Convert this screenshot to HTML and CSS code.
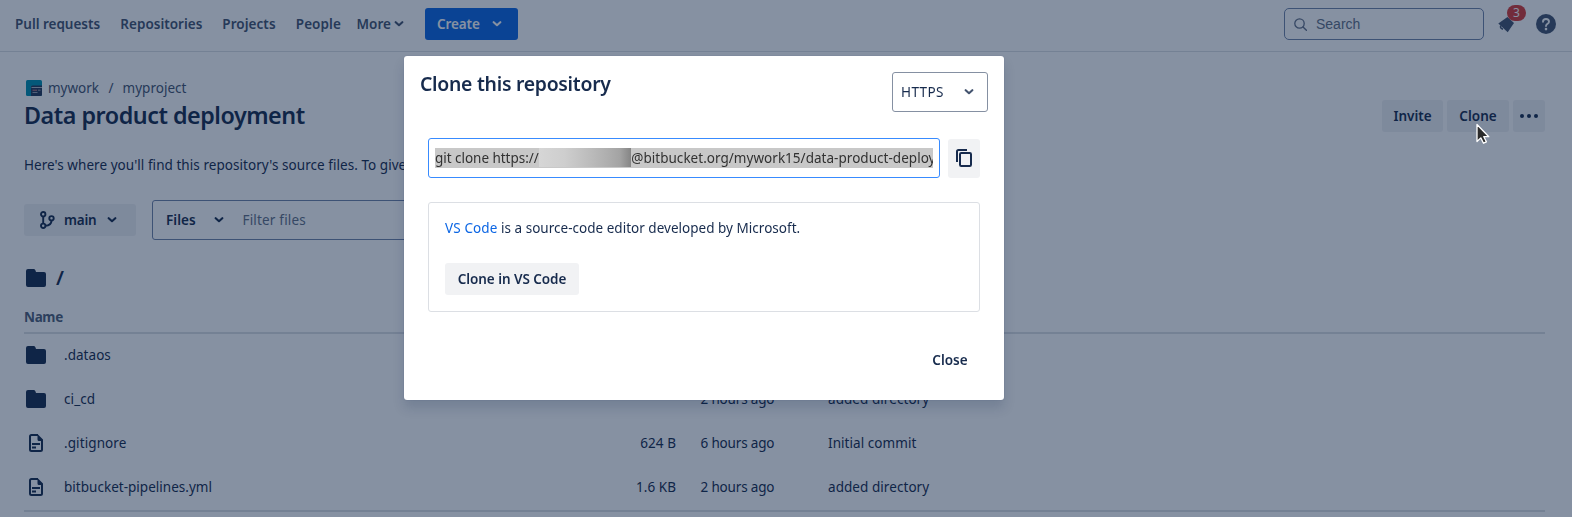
FILE: index.html
```html
<!DOCTYPE html>
<html lang="en">
<head>
<meta charset="utf-8">
<title>Data product deployment</title>
<link rel="stylesheet" href="styles.css">
</head>
<body>
<svg class="defs" aria-hidden="true">
  <symbol id="chevron" viewBox="0 0 10 6"><path d="M1.7 1.200 5 4.200 8.300 1.200" fill="none" stroke="currentColor" stroke-width="2.100" stroke-linecap="round" stroke-linejoin="round"/></symbol>
  <symbol id="folder" viewBox="0 0 20 18"><path d="M0 2a2 2 0 0 1 2-2h5.500c1 0 1.700.6 2 1.500L10 3h8a2 2 0 0 1 2 2v11a2 2 0 0 1-2 2H2a2 2 0 0 1-2-2z" fill="currentColor"/></symbol>
  <symbol id="file" viewBox="0 0 14 18"><path d="M9 1H2.500A1.500 1.500 0 0 0 1 2.500v13A1.500 1.500 0 0 0 2.500 17h9a1.500 1.500 0 0 0 1.500-1.500V6" fill="none" stroke="currentColor" stroke-width="2"/><path d="M8.500 0 14 5.500V7H10a1.500 1.500 0 0 1-1.500-1.500zM3 9h8v2H3zM3 12.500h4v2H3z" fill="currentColor"/></symbol>
</svg>

<header class="topbar">
  <nav class="nav">
    <a class="nav-a">Pull requests</a>
    <a class="nav-b">Repositories</a>
    <a class="nav-c">Projects</a>
    <a class="nav-c">People</a>
    <a class="nav-c">More</a>
    <svg class="chev"><use href="#chevron"/></svg>
  </nav>
  <button class="create">Create<svg class="chev"><use href="#chevron"/></svg></button>
  <div class="search">
    <svg width="13" height="13" viewBox="0 0 13 13"><circle cx="5.500" cy="5.500" r="4.700" fill="none" stroke="currentColor" stroke-width="1.300"/><path d="m9 9 3.400 3.300" stroke="currentColor" stroke-width="1.400" stroke-linecap="round"/></svg>
    <span>Search</span>
  </div>
  <div class="bell">
    <svg width="18" height="18" viewBox="0 0 18 18"><path d="M.3 8.600 9.500 2 16 8l-6.300 9.300z" fill="currentColor"/><path d="M2.800 10.500c-.8 1.900.1 3.400 2.200 3.600" fill="none" stroke="currentColor" stroke-width="1.600"/></svg>
    <span class="badge">3</span>
  </div>
  <svg class="help" width="20" height="20" viewBox="0 0 20 20"><circle cx="10" cy="10" r="10" fill="currentColor"/><path d="M7 7.800C7 5.900 8.200 5 10 5s3 1.100 3 2.700c0 2.100-3 2.200-3 4.400" fill="none" stroke="#fff" stroke-width="1.900" stroke-linecap="round"/><circle cx="10" cy="15.100" r="1.300" fill="#fff"/></svg>
</header>

<main class="page">
  <div class="head">
    <div>
      <div class="crumbs">
        <svg width="16" height="16" viewBox="0 0 16 16"><rect width="16" height="16" rx="1.500" fill="#008fae"/><path d="M5 7a1.500 1.500 0 0 1 1.500-1.500H16v9a1.500 1.500 0 0 1-1.500 1.500H5z" fill="#253858"/><path d="M5.500 7.500H16" stroke="#b3bac5"/><path d="M6.500 10.200H11" stroke="#c97a80"/><path d="M12 10.200h2.500M6.500 12.500h5" stroke="#97a0af"/></svg>
        <a class="crumb-a">mywork</a><span class="slash">/</span><a>myproject</a>
      </div>
      <h1>Data product deployment</h1>
    </div>
    <div class="actions">
      <button class="btn invite">Invite</button>
      <button class="btn clone">Clone</button>
      <button class="btn more"><svg width="18" height="4" viewBox="0 0 18 4"><g fill="currentColor"><circle cx="2" cy="2" r="2"/><circle cx="9" cy="2" r="2"/><circle cx="16" cy="2" r="2"/></g></svg></button>
    </div>
  </div>
  <p class="desc">Here's where you'll find this repository's source files. To give</p>
  <div class="filters">
    <button class="btn branch">
      <svg width="15" height="18" viewBox="0 0 15 18" fill="none" stroke="currentColor" stroke-width="1.900"><circle cx="3.200" cy="3.200" r="2.200"/><circle cx="3.200" cy="14.800" r="2.200"/><circle cx="11.500" cy="7.300" r="2.200"/><path d="M3.200 5.400v7.200M11.500 9.500c0 3.500-2 5-6.200 5.300"/></svg>
      <span>main</span>
      <svg class="chev"><use href="#chevron"/></svg>
    </button>
    <div class="filter">
      <b>Files</b>
      <svg class="chev"><use href="#chevron"/></svg>
      <span>Filter files</span>
    </div>
  </div>
  <div class="path"><svg class="folder"><use href="#folder"/></svg><span>/</span></div>
  <div class="thead">Name</div>
  <div class="rows">
    <div class="row"><svg class="folder"><use href="#folder"/></svg><span class="w1">.dataos</span></div>
    <div class="row"><svg class="folder"><use href="#folder"/></svg><span class="w2">ci_cd</span><span class="size"></span><span class="tight">2 hours ago</span><span>added directory</span></div>
    <div class="row"><svg class="file"><use href="#file"/></svg><span class="w2">.gitignore</span><span class="size">624 B</span><span class="tight">6 hours ago</span><span>Initial commit</span></div>
    <div class="row"><svg class="file"><use href="#file"/></svg><span class="w0">bitbucket-pipelines.yml</span><span class="size">1.6 KB</span><span class="tight">2 hours ago</span><span>added directory</span></div>
  </div>
</main>

<div class="blanket">
  <section class="modal">
    <div class="modal-head">
      <h2>Clone this repository</h2>
      <div class="select">HTTPS<svg class="chev"><use href="#chevron"/></svg></div>
    </div>
    <div class="url-row">
      <div class="url"><div class="selected"><span class="url-a">git clone https://</span><span class="redacted"></span><span class="url-b">@bitbucket.org/mywork15/data-product-deploy</span></div></div>
      <button class="copy"><svg width="16" height="18" viewBox="0 0 16 18" fill="none" stroke="currentColor" stroke-width="2"><path d="M1 13V2.500A1.500 1.500 0 0 1 2.500 1H11"/><rect x="4" y="4" width="11" height="13" rx="1.200"/></svg></button>
    </div>
    <div class="panel">
      <p><a>VS Code</a> is a source-code editor developed by Microsoft.</p>
      <button class="vs">Clone in VS Code</button>
    </div>
    <div class="modal-foot"><button class="close">Close</button></div>
  </section>
</div>
<svg class="cursor" width="16" height="24" viewBox="0 0 16 24"><path d="M2 1.500v17l3.800-3.600 2.700 5.300 2.900-1.400-2.600-5.100h5z" fill="#2b2b2b" stroke="#fff" stroke-width="1.300" stroke-linejoin="round"/></svg>
</body>
</html>
```
FILE: styles.css
```css
* { box-sizing: border-box; }
body { margin: 0; height: 517px; overflow: hidden; background: #fff; color: #172b4d; font: 400 13.5px/20px "Noto Sans", "Open Sans", sans-serif; }
button { font: 600 13.5px/20px "Noto Sans", "Open Sans", sans-serif; color: #172b4d; border: 0; border-radius: 3px; padding: 0; }
h1, h2, p { margin: 0; }
svg { display: block; flex: none; }
.defs { position: absolute; width: 0; height: 0; }
.chev { width: 10px; height: 6px; }

.topbar { height: 52px; padding: 8px 16px 11px 15px; border-bottom: 1px solid #dcdfe4; display: flex; align-items: center; color: #44546f; }
.nav { display: grid; grid-template-columns: 105.3px 102px 73.500px 60.700px 38px 10px; align-items: center; font-weight: 600; width: 410px; }
.nav-a { letter-spacing: -.02px; }
.nav-b { letter-spacing: .02px; }
.nav-c { letter-spacing: .06px; }
.create { width: 93px; height: 32px; background: #0c66e4; color: #fff; display: flex; align-items: center; gap: 12px; padding-left: 12px; letter-spacing: -.1px; }
.search { margin-left: auto; width: 200px; height: 32px; border: 1px solid #7083a8; border-radius: 5px; display: flex; align-items: center; gap: 9px; padding-left: 9px; color: #626f86; font: 14px/20px "Liberation Sans", Arial, sans-serif; }
.bell { position: relative; margin-left: 14px; width: 18px; height: 18px; }
.badge { position: absolute; left: 9px; top: -10px; width: 19px; height: 16px; border-radius: 8px; background: #d83a35; color: #fff; font-size: 12px; line-height: 16px; text-align: center; }
.help { margin-left: 20px; }

.page { padding: 26px 27px 0 24px; }
.head { display: flex; justify-content: space-between; height: 68px; }
.crumbs { display: flex; align-items: center; height: 20px; padding-left: 2px; color: #44546f; }
.crumb-a { margin-left: 6px; }
.slash { margin: 0 9px 0 9.500px; }
h1 { font-size: 23.3px; font-weight: 600; line-height: 28px; margin-top: 3px; letter-spacing: -.47px; }
.actions { display: flex; gap: 4px; padding-top: 22px; }
.btn { background: #f0f1f4; height: 32px; }
.invite { width: 61px; letter-spacing: -.03px; }
.clone { width: 62px; letter-spacing: .05px; }
.more { width: 32px; display: flex; align-items: center; justify-content: center; }
.desc { margin-top: 9px; white-space: nowrap; letter-spacing: .05px; }
.filters { display: flex; align-items: center; gap: 16px; margin-top: 25px; }
.branch { width: 112px; display: flex; align-items: center; padding-left: 16px; }
.branch span { width: 34px; margin: 0 9px; text-align: left; letter-spacing: -.2px; }
.filter { width: 400px; height: 40px; border: 1px solid #7083a8; border-radius: 3px; display: flex; align-items: center; padding-left: 13px; }
.filter b { font-weight: 600; width: 48px; letter-spacing: .05px; }
.filter span { margin-left: 18.500px; color: #626f86; letter-spacing: .18px; }
.path { display: flex; align-items: center; height: 28px; margin-top: 24px; padding-left: 2px; font-size: 20px; font-weight: 600; gap: 10px; line-height: 28px; }
.folder { width: 20px; height: 18px; }
.file { width: 14px; height: 18px; margin-left: 3px; }
.thead { margin-top: 15px; height: 27px; border-bottom: 2px solid #dcdfe4; color: #505f79; font-weight: 700; line-height: 20px; letter-spacing: -.35px; }
.rows { border-bottom: 2px solid #dcdfe4; }
.row { display: grid; grid-template-columns: 38px 512px 100px 128px 1fr; height: 44px; align-items: center; padding: 0 0 2px 2px; letter-spacing: .06px; }
.size { text-align: right; }
.row .size + span { padding-left: 24.500px; }
.row .size + span + span { padding-left: 24px; }
.tight { letter-spacing: -.17px; }
.w0 { letter-spacing: .02px; }
.w1 { letter-spacing: .04px; }
.w2 { letter-spacing: .1px; }

.blanket { position: fixed; inset: 0; background: rgba(9, 30, 66, .49); }
.modal { width: 600px; height: 344px; margin: 56px 0 0 404px; background: #fff; border-radius: 3px; box-shadow: 0 8px 12px rgba(9, 30, 66, .15), 0 0 1px rgba(9, 30, 66, .31); padding: 16px 24px 0; }
.modal-head { display: flex; justify-content: space-between; margin: 0 -8px; height: 66px; }
h2 { font-size: 19.4px; font-weight: 600; line-height: 24px; letter-spacing: -.27px; }
.select { width: 96px; height: 40px; border: 1px solid #8590a2; border-radius: 3px; display: flex; align-items: center; justify-content: space-between; padding: 0 13px 0 8px; letter-spacing: .4px; }
.select .chev { color: #44546f; }
.url-row { display: flex; gap: 8px; align-items: center; }
.url { width: 512px; height: 40px; border: 1px solid #388bff; border-radius: 3px; padding: 9px 6px; }
.selected { height: 20px; background: #c8c8c8; color: #323232; display: flex; overflow: hidden; white-space: nowrap; }
.url-a { width: 104px; letter-spacing: -.03px; }
.url-b { letter-spacing: .03px; }
.redacted { width: 92px; height: 19px; flex: none; background: linear-gradient(90deg, #d6d6d6, #cecece 28%, #bababa 58%, #adadad 76%, #a3a3a3 88%, #858585); margin-right: .5px; }
.copy { width: 32px; height: 39px; background: #f1f2f4; display: flex; align-items: center; justify-content: center; }
.panel { width: 552px; height: 110px; margin-top: 24px; border: 1px solid #dcdfe4; border-radius: 3px; padding: 15px 16px; letter-spacing: .02px; }
.panel a { color: #0c66e4; letter-spacing: .12px; }
.vs { width: 134px; height: 32px; margin-top: 25px; background: #f1f2f4; letter-spacing: -.05px; }
.modal-foot { display: flex; justify-content: flex-end; margin-top: 32px; }
.close { width: 60px; height: 32px; background: none; letter-spacing: .02px; }
.cursor { position: fixed; left: 1475px; top: 123px; }
```
